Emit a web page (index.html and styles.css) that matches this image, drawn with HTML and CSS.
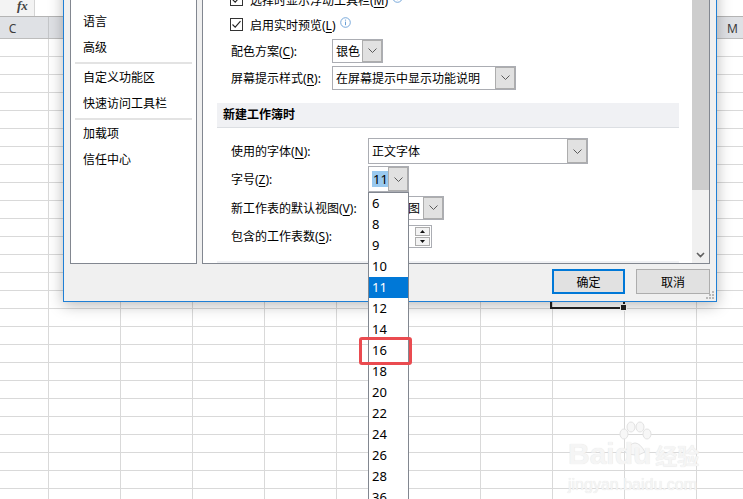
FILE: index.html
```html
<!DOCTYPE html>
<html lang="zh-CN">
<head>
  <meta charset="UTF-8">
  <title>Excel 选项</title>
  <link rel="stylesheet" href="styles.css">
</head>
<body>
  <div class="sheet">
    <div class="formula-bar">
      <div class="fx-box">fx</div>
      <div class="formula-input"></div>
    </div>
    <div class="col-heads">
      <div class="col-head">C</div>
      <div class="col-head">D</div>
      <div class="col-head">E</div>
      <div class="col-head">F</div>
      <div class="col-head">G</div>
      <div class="col-head">H</div>
      <div class="col-head">I</div>
      <div class="col-head">J</div>
      <div class="col-head">K</div>
      <div class="col-head">L</div>
      <div class="col-head">M</div>
    </div>
    <div class="cells">
      <div class="active-cell"></div>
      <div class="fill-handle"></div>
    </div>
    <div class="watermark">
      <div class="wm-logo">
        <span>Bai</span>
        <svg class="paw" width="40" height="40" viewBox="0 0 40 40">
          <ellipse cx="9" cy="14" rx="4" ry="5"/>
          <ellipse cx="16" cy="7" rx="4" ry="5"/>
          <ellipse cx="25" cy="7" rx="4" ry="5"/>
          <ellipse cx="32" cy="14" rx="4" ry="5"/>
          <path d="M10 32 Q20 14 30 32 Q20 38 10 32 Z"/>
        </svg>
        <span class="wm-du">du</span>
        <span class="wm-cn">经验</span>
      </div>
      <div class="wm-url">jingyan.baidu.com</div>
    </div>
  </div>

  <div class="dialog">
    <div class="dlg-body">
      <ul class="nav">
        <li>语言</li>
        <li>高级</li>
        <li class="sep"></li>
        <li>自定义功能区</li>
        <li>快速访问工具栏</li>
        <li class="sep"></li>
        <li>加载项</li>
        <li>信任中心</li>
      </ul>

      <div class="panel">
        <div class="options">
          <div class="check-row">
            <span class="checkbox"><svg width="11" height="11" viewBox="0 0 11 11"><polyline points="1.5,5.5 4.2,8.2 9.5,2.2"/></svg></span>
            <span>选择时显示浮动工具栏(<u>M</u>)</span>
            <svg class="info" width="11" height="11" viewBox="0 0 11 11"><circle cx="5.5" cy="5.5" r="4.8"/><line x1="5.5" y1="4.6" x2="5.5" y2="8.2"/><circle class="dot" cx="5.5" cy="3.1" r="0.7"/></svg>
          </div>
          <div class="check-row">
            <span class="checkbox"><svg width="11" height="11" viewBox="0 0 11 11"><polyline points="1.5,5.5 4.2,8.2 9.5,2.2"/></svg></span>
            <span>启用实时预览(<u>L</u>)</span>
            <svg class="info" width="11" height="11" viewBox="0 0 11 11"><circle cx="5.5" cy="5.5" r="4.8"/><line x1="5.5" y1="4.6" x2="5.5" y2="8.2"/><circle class="dot" cx="5.5" cy="3.1" r="0.7"/></svg>
          </div>
          <div class="field-row">
            <span class="label">配色方案(<u>C</u>):</span>
            <div class="combo scheme">
              <span class="combo-text">银色</span>
              <span class="combo-btn"><svg width="9" height="5" viewBox="0 0 9 5"><polyline points="0.5,0.5 4.5,4.5 8.5,0.5"/></svg></span>
            </div>
          </div>
          <div class="field-row">
            <span class="label">屏幕提示样式(<u>R</u>):</span>
            <div class="combo tips">
              <span class="combo-text">在屏幕提示中显示功能说明</span>
              <span class="combo-btn"><svg width="9" height="5" viewBox="0 0 9 5"><polyline points="0.5,0.5 4.5,4.5 8.5,0.5"/></svg></span>
            </div>
          </div>

          <div class="band">新建工作簿时</div>

          <div class="group">
            <div class="field-row">
              <span class="label">使用的字体(<u>N</u>):</span>
              <div class="combo tall font">
                <span class="combo-text">正文字体</span>
                <span class="combo-btn"><svg width="9" height="5" viewBox="0 0 9 5"><polyline points="0.5,0.5 4.5,4.5 8.5,0.5"/></svg></span>
              </div>
            </div>
            <div class="field-row">
              <span class="label">字号(<u>Z</u>):</span>
              <div class="combo tall size">
                <span class="combo-text"><span class="selected-text">11</span></span>
                <span class="combo-btn"><svg width="9" height="5" viewBox="0 0 9 5"><polyline points="0.5,0.5 4.5,4.5 8.5,0.5"/></svg></span>
              </div>
            </div>
            <div class="field-row">
              <span class="label">新工作表的默认视图(<u>V</u>):</span>
              <div class="combo view">
                <span class="combo-text">普通视图</span>
                <span class="combo-btn"><svg width="9" height="5" viewBox="0 0 9 5"><polyline points="0.5,0.5 4.5,4.5 8.5,0.5"/></svg></span>
              </div>
            </div>
            <div class="field-row">
              <span class="label">包含的工作表数(<u>S</u>):</span>
              <div class="spin">
                <span class="spin-text">1</span>
                <span class="spin-btns">
                  <span class="spin-btn"><svg width="5" height="3" viewBox="0 0 5 3"><polygon points="0,3 2.5,0 5,3"/></svg></span>
                  <span class="spin-btn"><svg width="5" height="3" viewBox="0 0 5 3"><polygon points="0,0 2.5,3 5,0"/></svg></span>
                </span>
              </div>
            </div>
          </div>

          <div class="band next">计算此工作簿时</div>
        </div>

        <div class="scrollbar">
          <div class="thumb"></div>
          <div class="track"></div>
          <div class="arrow-down"><svg width="9" height="6" viewBox="0 0 9 6"><polyline points="1,1 4.5,4.5 8,1"/></svg></div>
        </div>
      </div>
    </div>

    <div class="dlg-foot">
      <button class="btn btn-primary">确定</button>
      <button class="btn">取消</button>
    </div>

    <svg class="grip" width="9" height="9" viewBox="0 0 9 9">
      <rect x="6" y="0" width="2" height="2"/>
      <rect x="3" y="3" width="2" height="2"/>
      <rect x="6" y="3" width="2" height="2"/>
      <rect x="0" y="6" width="2" height="2"/>
      <rect x="3" y="6" width="2" height="2"/>
      <rect x="6" y="6" width="2" height="2"/>
    </svg>
  </div>

  <ul class="size-list">
    <li>6</li>
    <li>8</li>
    <li>9</li>
    <li>10</li>
    <li class="current">11</li>
    <li>12</li>
    <li>14</li>
    <li>16</li>
    <li>18</li>
    <li>20</li>
    <li>22</li>
    <li>24</li>
    <li>26</li>
    <li>28</li>
    <li>36</li>
  </ul>
  <div class="callout"></div>
</body>
</html>
```

FILE: styles.css
```css
* { box-sizing: border-box; }
body { margin: 0; width: 743px; height: 499px; overflow: hidden; position: relative; background: #fff; font-family: "Noto Sans", "Noto Sans CJK SC", sans-serif; font-size: 12px; color: #000; }
u { text-decoration-thickness: 1px; text-underline-offset: 2px; }

/* spreadsheet behind the dialog */
.sheet { width: 743px; height: 499px; position: relative; }
.formula-bar { height: 17px; display: flex; border-bottom: 1px solid #b4b4b4; }
.fx-box { width: 35px; background: #f3f3f3; border-right: 1px solid #d4d4d4; padding-left: 17px; font: italic bold 13px "Liberation Serif", serif; line-height: 11px; color: #444; }
.formula-input { flex: 1; background: #fff; }
.col-heads { display: flex; margin-left: -23px; height: 22px; background: #dfe1e5; border-bottom: 1px solid #bdbdbd; }
.col-head { flex: 0 0 72px; border-right: 1px solid #c4c6c9; text-align: center; padding-top: 3px; line-height: 18px; color: #3c3c3c; }
.cells { position: relative; height: 460px; background-image: linear-gradient(to right, #d9d9d9 1px, transparent 1px), linear-gradient(to bottom, #d9d9d9 1px, transparent 1px); background-size: 72px 18px; background-position: 48px 17px; }
.active-cell { position: absolute; left: 550px; top: 249px; width: 75px; height: 21px; border: 2px solid #222; }
.fill-handle { position: absolute; left: 620px; top: 265px; width: 7px; height: 7px; background: #222; border: 1px solid #fff; }

.watermark { position: absolute; left: 568px; top: 420px; color: #f5f5f5; text-shadow: 0 0 1px #dedede; font-family: "Liberation Sans", sans-serif; }
.wm-logo { display: flex; align-items: flex-end; font-weight: bold; font-size: 30px; line-height: 40px; }
.wm-du { margin-left: -40px; }
.paw { fill: #f7f7f7; stroke: #e2e2e2; stroke-width: 1; margin-bottom: 14px; }
.wm-cn { font-family: "Noto Sans CJK SC", sans-serif; font-size: 22px; margin-left: 4px; }
.wm-url { font-size: 16px; line-height: 18px; margin-top: 2px; }

/* options dialog */
.dialog { position: absolute; left: 63px; top: -30px; width: 654px; height: 332px; background: #f0f0f0; border: 1px solid #1f7fd5; box-shadow: 0 3px 14px rgba(0,0,0,0.28); padding: 7px 6px; display: flex; flex-direction: column; z-index: 2; }
.dlg-body { display: flex; gap: 5px; height: 286px; }
.nav { width: 127px; margin: 0; padding: 30px 0 0; list-style: none; background: #fff; border: 1px solid #828790; }
.nav li { height: 26px; line-height: 26px; padding-left: 12px; }
.nav li.sep { height: 2px; margin: 1px 4px; padding: 0; background: #e3e3e3; }

.panel { flex: 1; display: flex; background: #fff; border: 1px solid #828790; overflow: hidden; }
.options { flex: 1; padding-top: 8px; }
.check-row { height: 25px; display: flex; align-items: center; padding-left: 27px; }
.checkbox { width: 13px; height: 13px; border: 1px solid #333; margin-right: 7px; display: flex; align-items: center; justify-content: center; }
.checkbox polyline { fill: none; stroke: #222; stroke-width: 1.1; }
.info { margin-left: 4px; margin-top: -4px; }
.info circle { fill: #fff; stroke: #6a9fd6; stroke-width: 0.9; }
.info line { stroke: #6a9fd6; stroke-width: 1; }
.info .dot { fill: #6a9fd6; stroke: none; }

.field-row { display: flex; align-items: center; padding-left: 28px; height: 27px; }
.field-row .label { width: 101px; white-space: nowrap; }
.group .field-row { height: 28.33px; }
.group .label { width: 137px; }

.band { margin: 12px 13px 9px 14px; height: 25px; line-height: 24px; padding-left: 6px; background: #f0f1f4; border-bottom: 1px solid #dcdfe3; font-weight: bold; }
.band.next { margin-top: 11px; }

.combo { display: flex; height: 24px; border: 1px solid #abadb3; background: #fff; }
.combo.tall { height: 26px; }
.combo-text { flex: 1; padding-left: 3px; display: flex; align-items: center; white-space: nowrap; overflow: hidden; }
.combo-btn { width: 20px; background: #e1e1e1; border: 1px solid #adadad; display: flex; align-items: center; justify-content: center; }
.combo-btn polyline { fill: none; stroke: #5a5a5a; stroke-width: 1; }
.combo.scheme { width: 51px; }
.combo.tips { width: 184px; }
.combo.font { width: 220px; }
.combo.size { width: 41px; }
.combo.view { width: 76px; }
.selected-text { background: #99c9ef; line-height: 16px; padding: 0 1px; font-size: 13px; }

.spin { display: flex; width: 64px; height: 23px; border: 1px solid #abadb3; background: #fff; }
.spin-text { flex: 1; padding-left: 3px; line-height: 21px; }
.spin-btns { width: 15px; margin: 1px 1px 1px 0; display: flex; flex-direction: column; gap: 1px; }
.spin-btn { flex: 1; border: 1px solid #adadad; background: #f3f3f3; display: flex; align-items: center; justify-content: center; }
.spin-btn polygon { fill: #111; }

.scrollbar { width: 17px; background: #f0f0f0; display: flex; flex-direction: column; }
.thumb { height: 211px; background: #cdcdcd; }
.track { flex: 1; }
.arrow-down { height: 17px; display: flex; align-items: center; justify-content: center; }
.arrow-down polyline { fill: none; stroke: #606060; stroke-width: 1.6; }

.dlg-foot { display: flex; justify-content: flex-end; gap: 11px; margin-top: 5px; }
.btn { height: 25px; width: 74px; padding: 0; background: #e1e1e1; border: 1px solid #adadad; font-family: "Noto Sans CJK SC", sans-serif; font-size: 12px; color: #000; }
.btn-primary { width: 73px; border: 2px solid #0078d7; }
.grip { position: absolute; right: 1px; bottom: 1px; fill: #b8b8b8; }

/* open font-size dropdown */
.size-list { position: absolute; left: 368px; top: 192px; width: 41px; height: 330px; margin: 0; padding: 0; list-style: none; background: #fff; border: 1px solid #828790; z-index: 3; font-size: 13px; }
.size-list li { height: 21px; line-height: 21px; padding-left: 3px; }
.size-list li.current { background: #0078d7; color: #fff; }
.callout { position: absolute; left: 359px; top: 337px; width: 53px; height: 28px; border: 3px solid #ea4b50; border-radius: 3px; z-index: 4; }
```
